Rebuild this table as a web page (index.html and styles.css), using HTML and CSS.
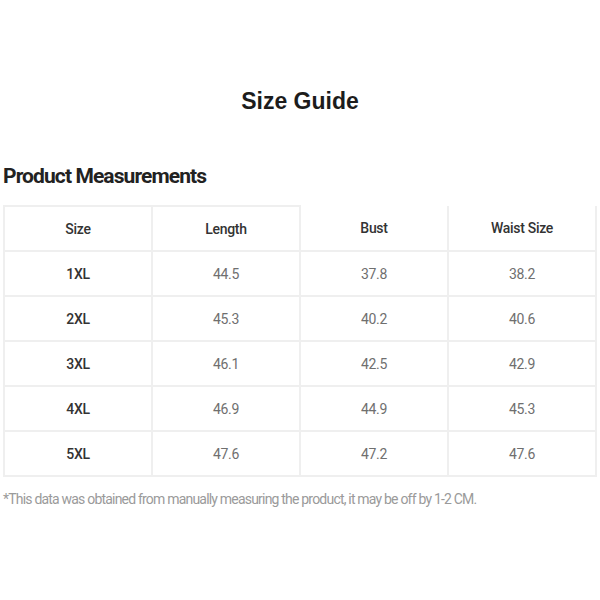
FILE: index.html
```html
<!DOCTYPE html>
<html>
<head>
<meta charset="utf-8">
<link rel="stylesheet" href="styles.css">
</head>
<body>
<div class="page">
  <h1 class="title">Size Guide</h1>
  <h2 class="subtitle">Product Measurements</h2>
  <table class="sizes">
    <thead>
      <tr>
        <th class="top">Size</th>
        <th class="top">Length</th>
        <th>Bust</th>
        <th>Waist Size</th>
      </tr>
    </thead>
    <tbody>
      <tr><td class="sz">1XL</td><td>44.5</td><td>37.8</td><td>38.2</td></tr>
      <tr><td class="sz">2XL</td><td>45.3</td><td>40.2</td><td>40.6</td></tr>
      <tr><td class="sz">3XL</td><td>46.1</td><td>42.5</td><td>42.9</td></tr>
      <tr><td class="sz">4XL</td><td>46.9</td><td>44.9</td><td>45.3</td></tr>
      <tr><td class="sz">5XL</td><td>47.6</td><td>47.2</td><td>47.6</td></tr>
    </tbody>
  </table>
  <p class="note">*This data was obtained from manually measuring the product, it may be off by 1-2 CM.</p>
</div>
</body>
</html>
```
FILE: styles.css
```css
html, body {
  margin: 0;
  padding: 0;
  background: #fff;
}
.page {
  padding: 86px 3px 0 3px;
  font-family: Roboto, "Liberation Sans", sans-serif;
}
.title {
  margin: 0;
  text-align: center;
  font-family: "Liberation Sans", Arial, sans-serif;
  font-weight: bold;
  font-size: 23px;
  line-height: 30px;
  color: #1c1c1c;
}
.subtitle {
  margin: 46px 0 0 0;
  font-size: 21px;
  line-height: 28px;
  font-weight: 700;
  color: #222;
  letter-spacing: -0.9px;
}
.sizes {
  margin-top: 15px;
  width: 594px;
  border-collapse: collapse;
  table-layout: fixed;
}
.sizes th, .sizes td {
  height: 43px;
  padding: 0;
  text-align: center;
  border: 2px solid #efefef;
  font-size: 14px;
  letter-spacing: -0.3px;
}
.sizes th {
  border-top: none;
  font-weight: 500;
  color: #333;
}
.sizes th.top {
  border-top: 2px solid #efefef;
}
.sizes td {
  color: #6f6f6f;
}
.sizes td.sz {
  color: #333;
  font-weight: 500;
}
.note {
  margin: 12px 0 0 0;
  font-size: 14px;
  line-height: 20px;
  color: #9a9a9a;
  letter-spacing: -0.8px;
}
```
